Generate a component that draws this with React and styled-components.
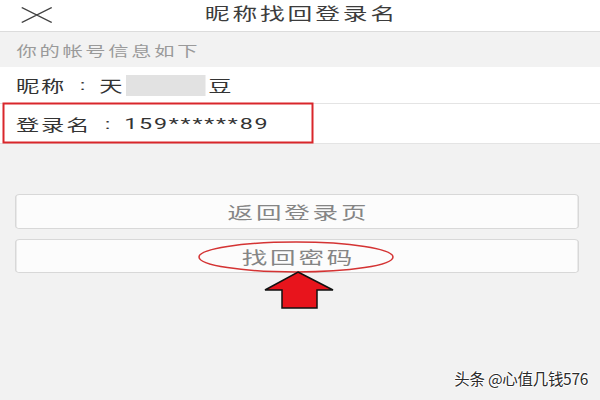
import styled, { createGlobalStyle } from "styled-components";

const GlobalStyle = createGlobalStyle`
  html, body {
    margin: 0;
    padding: 0;
    background: #fafafa;
  }
  body {
    font-family: "Noto Sans CJK SC", "Noto Sans", sans-serif;
  }
`

const Frame = styled.div`
  position: relative;
  width: 600px;
  height: 400px;
  overflow: hidden;
`

// the phone screenshot is stretched sideways, so lay it out at 400 and widen it
const Screen = styled.div`
  width: 400px;
  height: 400px;
  transform: scaleX(1.5);
  transform-origin: 0 0;
  background: #f2f2f2;
  display: flex;
  flex-direction: column;
`

const Header = styled.div`
  height: 31px;
  background: #fff;
  border-bottom: 1px solid #dcdcdc;
  display: grid;
  grid-template-columns: 1fr auto 1fr;
  align-items: center;
`

const Close = styled.div`
  display: flex;
  align-items: center;
  padding: 0 0 2px 14px;
`

const Title = styled.div`
  font-size: 16.5px;
  line-height: 1;
  letter-spacing: 1.9px;
  margin-right: -1.9px;
  color: #3c3c3c;
  padding-bottom: 4px;
`

const Subtitle = styled.div`
  height: 35px;
  display: flex;
  align-items: center;
  padding-left: 11px;
  font-size: 13.5px;
  letter-spacing: 1.8px;
  color: #9a9a9a;
`

const InfoRow = styled.div`
  height: ${(p) => p.$h}px;
  background: #fff;
  border-bottom: 1px solid #e4e4e4;
  display: flex;
  align-items: center;
  padding-left: 10.7px;
  font-family: Roboto, "Noto Sans CJK SC", sans-serif;
  font-size: 15.5px;
  letter-spacing: 1.2px;
  color: #333;
  white-space: nowrap;
`

const Colon = styled.span`
  display: inline-block;
  width: 22px;
  text-align: center;
  letter-spacing: 0;
`

const Masked = styled.span`
  display: inline-block;
  width: 53px;
  height: 21px;
  margin: 0 2px 0 1px;
  background: #e2e2e2;
`

const Actions = styled.div`
  display: flex;
  flex-direction: column;
  gap: 10px;
  margin-top: 50px;
  padding: 0 14px 0 10px;
`

const Button = styled.div`
  height: ${(p) => p.$h}px;
  box-sizing: border-box;
  border: 1px solid #d8d8d8;
  border-radius: 3px;
  background: #fcfcfc;
  display: flex;
  align-items: center;
  justify-content: center;
  font-size: 17px;
  letter-spacing: 1.9px;
  padding-left: 1.9px;
  color: #858585;
`

const Marks = styled.svg`
  position: absolute;
  left: 0;
  top: 0;
  pointer-events: none;
`

const Watermark = styled.div`
  position: absolute;
  right: 12px;
  top: 371px;
  font-size: 15.5px;
  line-height: 1;
  color: #2b2b2b;
  letter-spacing: -0.3px;
  text-shadow: 1px 0 #fff, -1px 0 #fff, 0 1px #fff, 0 -1px #fff;
`

const App = () => {
  return (
    <Frame>
      <GlobalStyle />
      <Screen>
        <Header>
          <Close>
            <svg width="21" height="16" viewBox="0 0 21 16">
              <path d="M0.5 0.5 L20.5 15.5 M20.5 0.5 L0.5 15.5" stroke="#444" strokeWidth="1.1" fill="none" />
            </svg>
          </Close>
          <Title>昵称找回登录名</Title>
          <div />
        </Header>
        <Subtitle>你的帐号信息如下</Subtitle>
        <InfoRow $h={36}>
          昵称<Colon>:</Colon>天<Masked />豆
        </InfoRow>
        <InfoRow $h={39}>
          登录名<Colon>:</Colon>159******89
        </InfoRow>
        <Actions>
          <Button $h={35}>返回登录页</Button>
          <Button $h={34}>找回密码</Button>
        </Actions>
      </Screen>
      <Marks width="600" height="400" viewBox="0 0 600 400">
        <rect x="3.5" y="103.5" width="309" height="39" fill="none" stroke="#d9262b" strokeWidth="2" />
        <ellipse cx="296" cy="257" rx="97" ry="15" fill="none" stroke="#d43333" strokeWidth="1.5" />
        <polygon
          points="298,272 333,290 317,290 317,308 282,308 282,290 265,290"
          fill="#e8141c"
          stroke="#111"
          strokeWidth="1.5"
          strokeLinejoin="miter"
        />
      </Marks>
      <Watermark>头条 @心值几钱576</Watermark>
    </Frame>
  )
}

export default App
